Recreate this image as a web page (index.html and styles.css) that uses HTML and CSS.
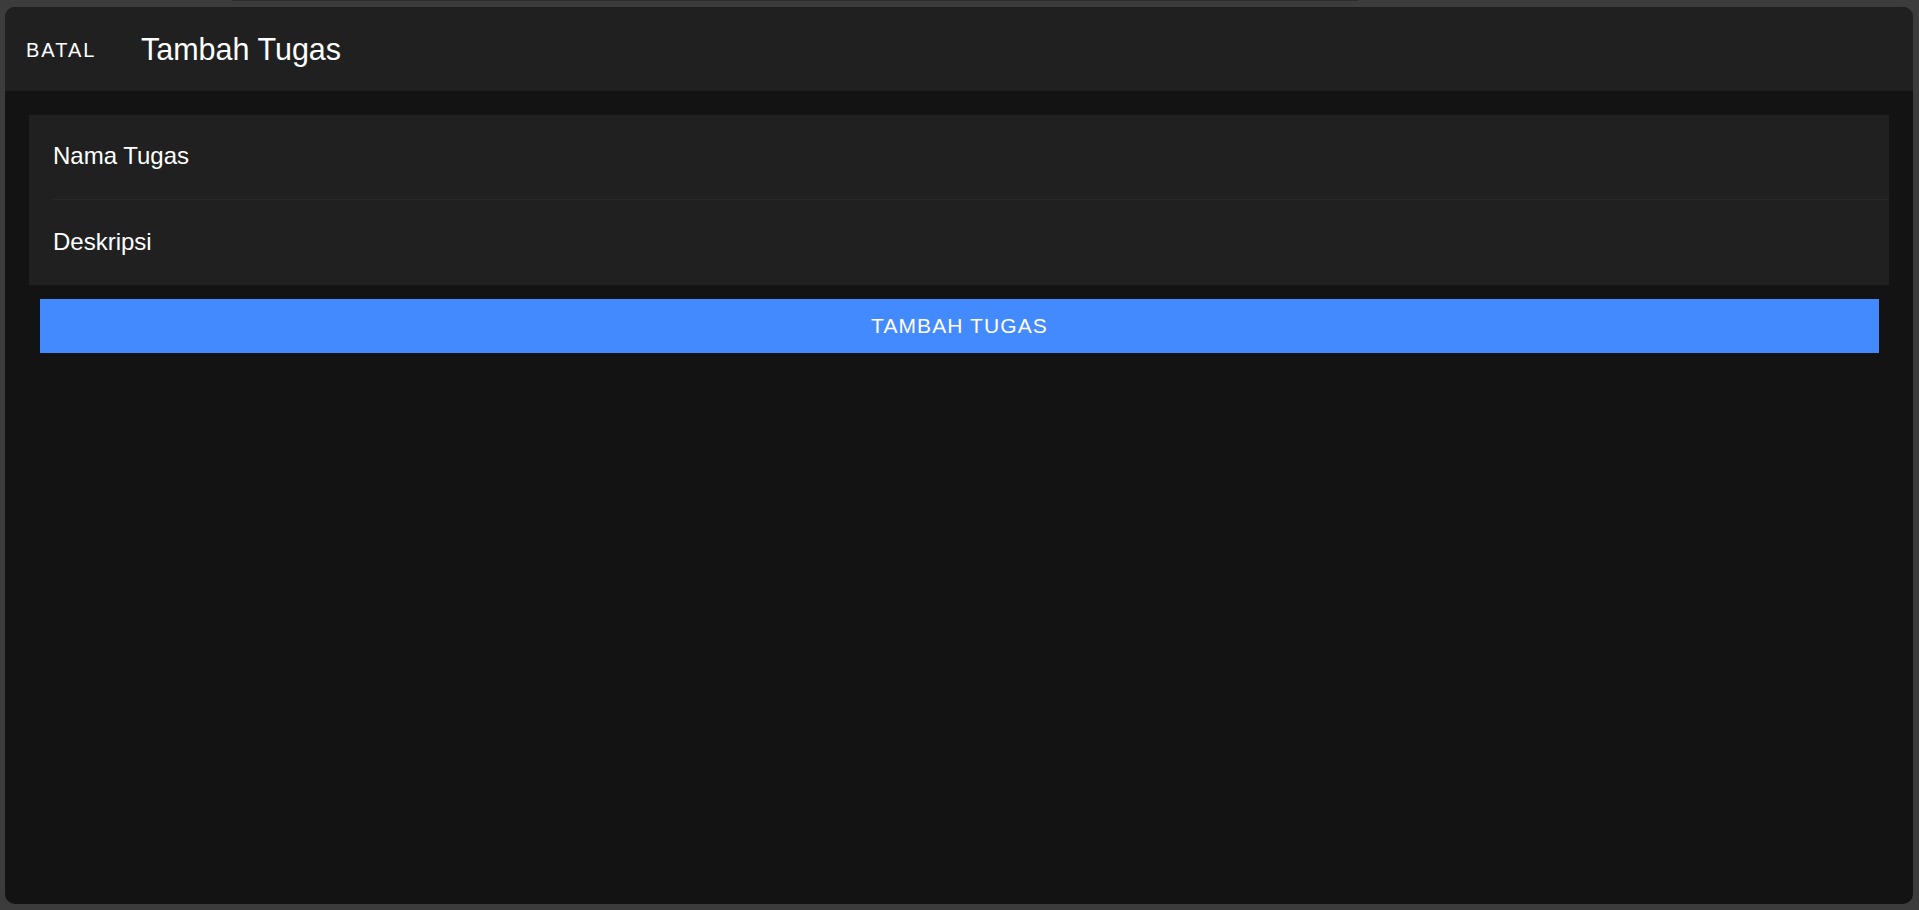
FILE: index.html
```html
<!DOCTYPE html>
<html lang="id">
<head>
<meta charset="utf-8">
<title>Tambah Tugas</title>
<link rel="stylesheet" href="styles.css">
</head>
<body>
<div class="frame">
  <div class="topline"></div>
  <div class="window">
    <header class="toolbar">
      <button class="cancel">BATAL</button>
      <h1 class="title">Tambah Tugas</h1>
    </header>
    <main class="content">
      <div class="card">
        <div class="item"><div class="item-inner sep">Nama Tugas</div></div>
        <div class="item"><div class="item-inner">Deskripsi</div></div>
      </div>
      <button class="submit">TAMBAH TUGAS</button>
    </main>
  </div>
</div>
</body>
</html>
```

FILE: styles.css
```css
html, body {
  margin: 0;
  padding: 0;
  background: #3c3c3c;
  font-family: "Liberation Sans", Arial, sans-serif;
  color: #fff;
}

.frame {
  width: 1919px;
  height: 910px;
  box-sizing: border-box;
  padding: 0 6px 6px 5px;
  display: flex;
  flex-direction: column;
}

.topline {
  height: 1px;
  margin: 0 0 6px 227px;
  width: 1126px;
  background: #2b2b2b;
}

.window {
  flex: 1;
  border-radius: 10px;
  overflow: hidden;
  background: #131313;
  display: flex;
  flex-direction: column;
}

.toolbar {
  height: 84px;
  flex: 0 0 84px;
  background: #202020;
  display: flex;
  align-items: center;
}

.cancel {
  background: none;
  border: 0;
  padding: 0 0 0 21px;
  margin: 2px 0 0 0;
  color: #fff;
  font-family: inherit;
  font-size: 20px;
  letter-spacing: 2px;
  width: 136px;
  text-align: left;
}

.title {
  margin: 0;
  font-size: 30.5px;
  font-weight: normal;
  color: #fff;
}

.content {
  padding: 24px;
  display: flex;
  flex-direction: column;
}

.card {
  background: #202020;
}

.item {
  padding-left: 24px;
}

.item-inner {
  height: 85px;
  box-sizing: border-box;
  display: flex;
  align-items: center;
  font-size: 24px;
  padding-bottom: 2px;
}

.item-inner.sep {
  border-bottom: 1px solid #282828;
}

.submit {
  margin: 14px 10px 0 11px;
  height: 54px;
  border: 0;
  background: #448aff;
  color: #fff;
  font-family: inherit;
  font-size: 21px;
  letter-spacing: 1.1px;
  text-align: center;
}
```
